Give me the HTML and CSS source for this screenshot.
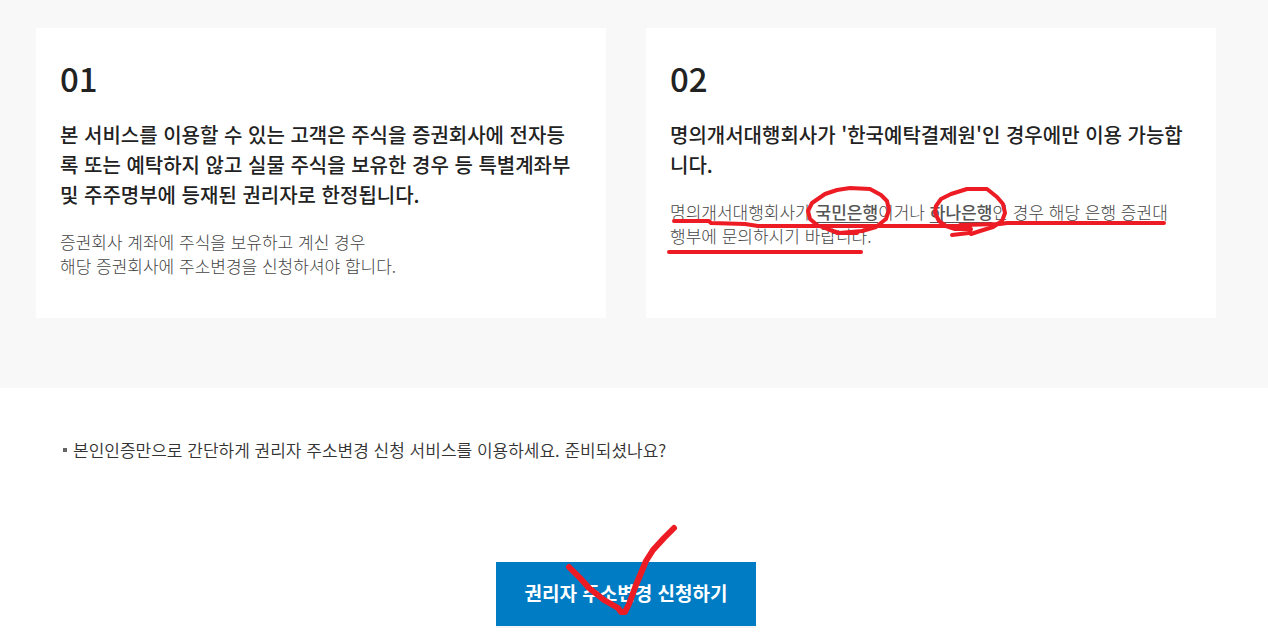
FILE: index.html
```html
<!DOCTYPE html>
<html lang="ko">
<head>
<meta charset="utf-8">
<meta name="viewport" content="width=device-width, initial-scale=1">
<title>권리자 주소변경 신청</title>
<link rel="stylesheet" href="styles.css">
</head>
<body>
<main>
  <section class="notice">
    <article class="card">
      <p class="number">01</p>
      <h2 class="title">본 서비스를 이용할 수 있는 고객은 주식을 증권회사에 전자등<br>록 또는 예탁하지 않고 실물 주식을 보유한 경우 등 특별계좌부<br>및 주주명부에 등재된 권리자로 한정됩니다.</h2>
      <p class="text">증권회사 계좌에 주식을 보유하고 계신 경우<br>해당 증권회사에 주소변경을 신청하셔야 합니다.</p>
    </article>
    <article class="card">
      <p class="number">02</p>
      <h2 class="title">명의개서대행회사가 '한국예탁결제원'인 경우에만 이용 가능합<br>니다.</h2>
      <p class="text">명의개서대행회사가 <a class="bank" href="#kb">국민은행</a>이거나 <a class="bank" href="#hana">하나은행</a>인 경우 해당 은행 증권대<br>행부에 문의하시기 바랍니다.</p>
      <svg class="marks" viewBox="646 28 570 290" width="570" height="290" aria-hidden="true">
        <path d="M674 221L709 221L711 223L745 224L758 226L792 226L970 226"/>
        <path d="M669 252H861"/>
        <path d="M837 190L825 194L812 203L808 211L810 219L817 225L830 230L839 233L862 231L876 227L886 219L889 210L887 201L881 195L870 189L850 188Z"/>
        <path d="M837 233H857"/>
        <path d="M967 189L951 194L941 199L936 206L935 213L939 221L946 226L955 229H971L969 233L952 235"/>
        <path d="M967 189H987L997 197L1003 204L1005 213L1002 221L993 227L980 231L971 234"/>
        <path d="M960 225L1000 224L1007 223H1164"/>
      </svg>
    </article>
  </section>
  <section class="apply">
    <ul class="guide"><li>본인인증만으로 간단하게 권리자 주소변경 신청 서비스를 이용하세요. 준비되셨나요?</li></ul>
    <div class="action">
      <button type="button" class="submit">권리자 주소변경 신청하기</button>
      <svg class="check" viewBox="560 520 120 100" width="120" height="100" aria-hidden="true"><path d="M569 567L580 578L589 588L604 600L618 608L621 612H625L629 604L636 585L646 561L653 550L664 538L674 528"/></svg>
    </div>
  </section>
</main>
</body>
</html>
```
FILE: styles.css
```css
* { box-sizing: border-box; }
body {
  margin: 0;
  background: #fff;
  color: #222;
  font-family: "Noto Sans CJK KR", "Noto Sans", sans-serif;
}
p, h2, ul { margin: 0; padding: 0; }
.notice {
  display: grid;
  grid-template-columns: 1fr 1fr;
  gap: 40px;
  padding: 28px 52px 70px 36px;
  background: #f8f8f8;
}
.card {
  position: relative;
  min-height: 290px;
  padding: 26px 20px 36px 24px;
  background: #fff;
}
.number {
  font-size: 33px;
  font-weight: 500;
  line-height: 48px;
}
.title {
  margin-top: 18px;
  font-size: 20px;
  font-weight: 500;
  line-height: 30px;
}
.text {
  margin-top: 20px;
  color: #444;
  font-size: 17px;
  font-weight: 300;
  line-height: 24px;
}
.bank {
  color: #555;
  font-weight: 500;
  text-decoration: underline;
  text-decoration-thickness: 1px;
  text-underline-offset: 3px;
}
.marks, .check {
  position: absolute;
  fill: none;
  stroke: #ed1c24;
  stroke-linecap: round;
  stroke-linejoin: round;
  pointer-events: none;
}
.marks {
  top: 0;
  left: 0;
  stroke-width: 4px;
}
.apply { padding: 50px 52px 16px 36px; }
.guide {
  padding-left: 27px;
  list-style: none;
}
.guide li {
  display: flex;
  align-items: center;
  gap: 6px;
  color: #333;
  font-size: 17px;
  font-weight: 350;
  line-height: 24px;
}
.guide li::before {
  content: "";
  width: 4px;
  height: 4px;
  background: #666;
}
.action {
  position: relative;
  width: 260px;
  margin: 100px auto 0;
}
.submit {
  display: block;
  width: 100%;
  height: 64px;
  padding: 0 0 4px;
  border: 0;
  background: #007cc4;
  box-shadow: 0 2px 0 #f4f4f4;
  color: #fff;
  font-family: inherit;
  font-size: 19px;
  font-weight: 700;
  cursor: pointer;
}
.check {
  top: -42px;
  left: 64px;
  stroke-width: 6px;
}
```
